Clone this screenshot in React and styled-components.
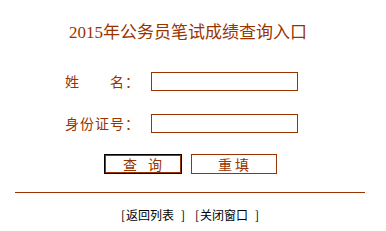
import React from "react";
import styled, { createGlobalStyle } from "styled-components";

const brown = "#993300";

const GlobalStyle = createGlobalStyle`
  body {
    margin: 0;
    background: #ffffff;
    font-family: "Noto Sans CJK SC", sans-serif;
  }
`;

function BracketLink({ children }) {
  return (
    <LinkItem>
      <Bracket>[</Bracket>
      <LinkText>{children}</LinkText>
      <Bracket>]</Bracket>
    </LinkItem>
  );
}

export default function App() {
  return (
    <>
      <GlobalStyle />
      <Page>
        <Title>2015年公务员笔试成绩查询入口</Title>
        <Form>
          <Row>
            <Label>姓　　名：</Label>
            <Input type="text" />
          </Row>
          <Row>
            <Label>身份证号：</Label>
            <Input type="text" />
          </Row>
        </Form>
        <ButtonRow>
          <Button $primary $wid="78px" $spacing="8px">
            查 询
          </Button>
          <Button $wid="86px">重 填</Button>
        </ButtonRow>
        <Divider />
        <Links>
          <BracketLink>返回列表</BracketLink>
          <BracketLink>关闭窗口</BracketLink>
        </Links>
      </Page>
    </>
  );
}

const Page = styled.div`
  width: 380px;
  display: flex;
  flex-direction: column;
  align-items: center;
`;

const Title = styled.div`
  margin-top: 23px;
  margin-right: 4px;
  height: 20px;
  font-family: "Liberation Serif", "Noto Sans CJK SC", serif;
  font-size: 17px;
  line-height: 20px;
  color: ${brown};
`;

const Form = styled.div`
  margin-top: 29px;
  margin-right: 17px;
  display: flex;
  flex-direction: column;
  gap: 23px;
`;

const Row = styled.div`
  display: flex;
  align-items: center;
  gap: 12px;
`;

const Label = styled.div`
  width: 74px;
  font-family: "Noto Sans CJK SC", sans-serif;
  font-size: 14px;
  line-height: 19px;
  letter-spacing: 1px;
  white-space: nowrap;
  color: ${brown};
`;

const Input = styled.input`
  box-sizing: border-box;
  width: 147px;
  height: 19px;
  margin: 0;
  padding: 0 2px;
  border: 1px solid ${brown};
  background: #ffffff;
  outline: none;
`;

const ButtonRow = styled.div`
  margin-top: 21px;
  display: flex;
  gap: 9px;
`;

const Button = styled.button`
  box-sizing: border-box;
  width: ${(p) => p.$wid};
  height: 20px;
  margin: 0;
  padding: 0;
  border: 1px solid ${(p) => (p.$primary ? "#000000" : brown)};
  box-shadow: ${(p) => (p.$primary ? `inset 0 0 0 1px ${brown}` : "none")};
  background: #ffffff;
  font-family: "Noto Sans CJK SC", sans-serif;
  font-size: 14px;
  line-height: 18px;
  word-spacing: ${(p) => p.$spacing || "0"};
  color: ${brown};
`;

const Divider = styled.div`
  margin-top: 18px;
  width: 350px;
  height: 1px;
  background: ${brown};
`;

const Links = styled.div`
  margin-top: 14px;
  display: flex;
  gap: 8px;
  font-family: "Noto Sans CJK SC", sans-serif;
  font-size: 12px;
  line-height: 16px;
  color: #000000;
`;

const LinkItem = styled.span`
  display: flex;
  white-space: nowrap;
`;

const LinkText = styled.span`
  margin-right: 6px;
`;

const Bracket = styled.span`
  display: inline-block;
  width: 6px;
  text-align: center;
`;
